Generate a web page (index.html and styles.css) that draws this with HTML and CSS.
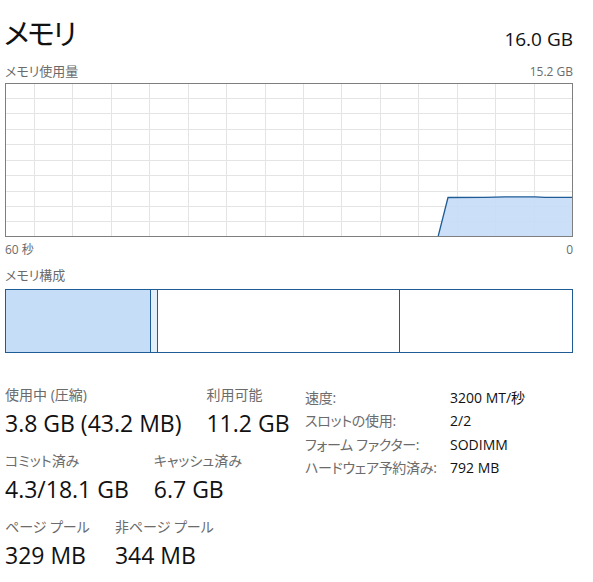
FILE: index.html
```html
<!DOCTYPE html>
<html lang="ja">
<head>
<meta charset="utf-8">
<title>メモリ</title>
<link rel="stylesheet" href="styles.css">
</head>
<body>
<div class="page">
  <header class="header">
    <h1 class="title">メモリ</h1>
    <div class="total">16.0 GB</div>
  </header>

  <div class="chart-head">
    <span class="cap-label">メモリ使用量</span>
    <span class="cap-num">15.2 GB</span>
  </div>
  <svg class="chart" width="568" height="154" viewBox="0 0 568 154">
    <g stroke="#e4e4e4" stroke-width="1">
      <line x1="29.5" y1="0" x2="29.5" y2="154"/>
      <line x1="67.5" y1="0" x2="67.5" y2="154"/>
      <line x1="106.5" y1="0" x2="106.5" y2="154"/>
      <line x1="144.5" y1="0" x2="144.5" y2="154"/>
      <line x1="183.5" y1="0" x2="183.5" y2="154"/>
      <line x1="221.5" y1="0" x2="221.5" y2="154"/>
      <line x1="260.5" y1="0" x2="260.5" y2="154"/>
      <line x1="298.5" y1="0" x2="298.5" y2="154"/>
      <line x1="336.5" y1="0" x2="336.5" y2="154"/>
      <line x1="375.5" y1="0" x2="375.5" y2="154"/>
      <line x1="413.5" y1="0" x2="413.5" y2="154"/>
      <line x1="452.5" y1="0" x2="452.5" y2="154"/>
      <line x1="490.5" y1="0" x2="490.5" y2="154"/>
      <line x1="529.5" y1="0" x2="529.5" y2="154"/>
      <line x1="0" y1="15.5" x2="568" y2="15.5"/>
      <line x1="0" y1="30.5" x2="568" y2="30.5"/>
      <line x1="0" y1="46.5" x2="568" y2="46.5"/>
      <line x1="0" y1="61.5" x2="568" y2="61.5"/>
      <line x1="0" y1="77.5" x2="568" y2="77.5"/>
      <line x1="0" y1="92.5" x2="568" y2="92.5"/>
      <line x1="0" y1="108.5" x2="568" y2="108.5"/>
      <line x1="0" y1="123.5" x2="568" y2="123.5"/>
      <line x1="0" y1="138.5" x2="568" y2="138.5"/>
    </g>
    <polygon points="433,154 443,114.5 480,114.3 500,113.8 530,113.8 540,114.3 568,114.3 568,154" fill="#c5dcf8" fill-opacity="0.9"/>
    <polyline points="433,154 443,114.5 480,114.3 500,113.8 530,113.8 540,114.3 568,114.3" fill="none" stroke="#1f5c96" stroke-width="1.3"/>
    <rect x="0.5" y="0.5" width="567" height="153" fill="none" stroke="#7f7f7f" stroke-width="1"/>
  </svg>
  <div class="axis">
    <span class="cap-num">60 秒</span>
    <span class="cap-num">0</span>
  </div>

  <div class="comp-head cap-label">メモリ構成</div>
  <div class="comp-bar">
    <div class="seg seg-inuse" style="width:145px"></div>
    <div class="seg seg-modified" style="width:7px"></div>
    <div class="seg seg-standby" style="width:242px"></div>
    <div class="seg seg-free"></div>
  </div>

  <section class="stats">
    <div class="stats-left">
      <div class="stat-row">
        <div class="stat">
          <div class="stat-label">使用中 (圧縮)</div>
          <div class="stat-value">3.8 GB (43.2 MB)</div>
        </div>
        <div class="stat">
          <div class="stat-label">利用可能</div>
          <div class="stat-value">11.2 GB</div>
        </div>
      </div>
      <div class="stat-row">
        <div class="stat">
          <div class="stat-label">コミット済み</div>
          <div class="stat-value">4.3/18.1 GB</div>
        </div>
        <div class="stat">
          <div class="stat-label">キャッシュ済み</div>
          <div class="stat-value">6.7 GB</div>
        </div>
      </div>
      <div class="stat-row">
        <div class="stat">
          <div class="stat-label">ページ プール</div>
          <div class="stat-value">329 MB</div>
        </div>
        <div class="stat">
          <div class="stat-label">非ページ プール</div>
          <div class="stat-value">344 MB</div>
        </div>
      </div>
    </div>
    <dl class="specs">
      <dt>速度:</dt><dd>3200 MT/秒</dd>
      <dt>スロットの使用:</dt><dd>2/2</dd>
      <dt>フォーム ファクター:</dt><dd>SODIMM</dd>
      <dt>ハードウェア予約済み:</dt><dd>792 MB</dd>
    </dl>
  </section>
</div>
</body>
</html>
```

FILE: styles.css
```css
html, body {
  margin: 0;
  padding: 0;
  background: #ffffff;
}

body {
  font-family: "Segoe UI", "Open Sans", "Noto Sans CJK JP", sans-serif;
  font-feature-settings: "palt";
  color: #000;
}

.page {
  width: 568px;
  padding-left: 5px;
}

.header {
  display: flex;
  justify-content: space-between;
  align-items: flex-end;
  height: 50px;
}

.title {
  margin: 15px 0 0 -1px;
  font-family: "Noto Sans CJK JP", sans-serif;
  font-weight: 400;
  font-size: 29px;
  line-height: 34px;
  letter-spacing: -2px;
  align-self: flex-start;
  color: #111;
}

.total {
  font-size: 19px;
  line-height: 20px;
  margin-bottom: 1px;
  color: #111;
}

.chart-head,
.axis {
  display: flex;
  justify-content: space-between;
  align-items: baseline;
}

.chart-head {
  margin-top: 13px;
  height: 16px;
}

.cap-label {
  font-size: 13px;
  line-height: 16px;
  color: #6b6b6b;
}

.cap-num {
  font-size: 12px;
  line-height: 16px;
  color: #6b6b6b;
}

.chart {
  display: block;
  margin-top: 4px;
}

.axis {
  margin-top: 5px;
  height: 16px;
}

.comp-head {
  margin-top: 9px;
}

.comp-bar {
  margin-top: 6px;
  height: 64px;
  border: 1px solid #1f5c96;
  box-sizing: border-box;
  display: flex;
}

.seg {
  box-sizing: border-box;
  height: 100%;
}

.seg-inuse {
  background: #c6ddf8;
  border-right: 1px solid #1f5c96;
}

.seg-modified {
  background: #e3eefb;
  border-right: 1px solid #1f5c96;
}

.seg-standby {
  background: #ffffff;
  border-right: 1px solid #1f5c96;
}

.seg-free {
  flex: 1;
  background: #ffffff;
}

.stats {
  margin-top: 33px;
  display: grid;
  grid-template-columns: 300px 1fr;
  align-items: start;
}

.stats-left {
  display: flex;
  flex-direction: column;
  gap: 14px;
}

.stat-row {
  display: flex;
  gap: 25px;
}

.stat-label {
  font-size: 14px;
  line-height: 18px;
  height: 18px;
  color: #6b6b6b;
}

.stat-value {
  margin-top: 4px;
  font-size: 23px;
  line-height: 30px;
  height: 30px;
  color: #111;
}

.specs {
  margin: 0;
  display: grid;
  grid-template-columns: 145px 1fr;
  grid-auto-rows: 23.4px;
  align-content: start;
  font-size: 14px;
  line-height: 23.4px;
}

.specs dt {
  color: #6b6b6b;
  letter-spacing: -0.3px;
}

.specs dd {
  margin: 0;
  color: #111;
}
```
